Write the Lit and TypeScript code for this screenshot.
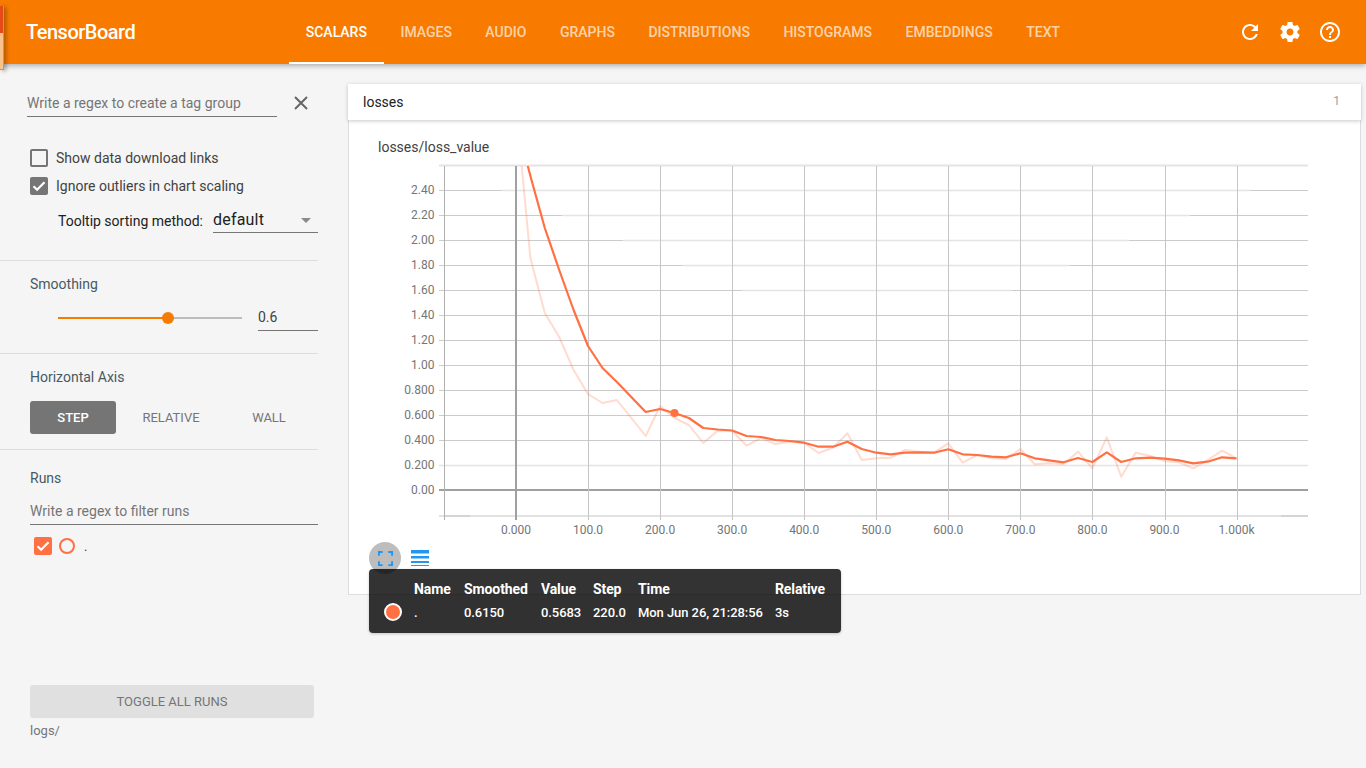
import { LitElement, html, svg, css } from "lit";
import { customElement } from "lit/decorators.js";

const TABS = ["SCALARS", "IMAGES", "AUDIO", "GRAPHS", "DISTRIBUTIONS", "HISTOGRAMS", "EMBEDDINGS", "TEXT"];

const SMOOTH = [120, 176, 228, 270, 310, 346, 368, 382, 397, 412, 409, 413, 418, 428, 429.5, 430.5, 436, 437, 440, 441, 442.7, 446.7, 446.7, 441.7, 449, 452.7, 454.3, 452.7, 452.3, 452.7, 449.3, 454.3, 455, 456.7, 457.3, 453.3, 458.3, 460.3, 462.3, 458, 462, 452.3, 462, 458.3, 457.7, 458.7, 460.3, 463.3, 461.7, 457.3, 458.3];
const RAW = [106, 258, 313, 337, 370, 394, 403, 400, 418, 436, 406, 418, 425, 443, 430.7, 430.7, 445.7, 438, 444, 441.7, 443, 453, 447.7, 433.3, 460, 458.3, 457.7, 450, 451.7, 452.7, 443.3, 462.7, 455, 458.3, 459, 449, 464.3, 463.3, 464, 451.7, 468.3, 437.3, 476.7, 452.7, 455.7, 461, 462.3, 468.3, 460, 450.7, 458.3];
const px = (i: number) => 516 + i * 14.41;
const pts = (a: number[]) => a.map((y, i) => `${px(i).toFixed(1)},${y}`).join(" ");

const Y_LABELS = ["2.40", "2.20", "2.00", "1.80", "1.60", "1.40", "1.20", "1.00", "0.800", "0.600", "0.400", "0.200", "0.00"];
const X_LABELS = ["0.000", "100.0", "200.0", "300.0", "400.0", "500.0", "600.0", "700.0", "800.0", "900.0", "1.000k"];
// x range in which a horizontal grid line has faded
const FADED: Record<number, [number, number]> = { 0: [502, 1250], 1: [562, 1190], 2: [623, 1129], 3: [682, 1070], 4: [742, 1012], 11: [439, 1308] };

const CHECK = svg`<path d="M3.5 9.2l3.6 3.6 7.4-7.6" fill="none" stroke="#fff" stroke-width="2.2"/>`;

@customElement("app-root")
export class AppRoot extends LitElement {
  static styles = css`
    :host { display: block; width: 1366px; height: 768px; overflow: hidden; position: relative; background: #f5f5f5; font-family: Roboto, sans-serif; font-size: 14px; color: #424242; }
    .edge { position: absolute; left: 0; top: 6px; width: 3px; height: 63px; z-index: 5; border-right: 1px solid #e8836b; border-bottom: 1px solid #e8836b; background: linear-gradient(#e64a19 0 27px, #f9c28d 27px); box-shadow: 2px 1px 4px rgba(0,0,0,.35); }
    header { height: 64px; background: #f87b00; display: flex; align-items: stretch; position: relative; z-index: 3; box-shadow: 0 2px 5px rgba(0,0,0,.28); color: #fff; }
    .logo { width: 263px; padding-left: 26px; font-size: 20px; font-weight: 500; line-height: 64px; letter-spacing: -.5px; flex: none; }
    .tabs { display: flex; }
    .tab { padding: 0 16.75px; font-size: 14px; font-weight: 500; line-height: 64px; color: rgba(255,255,255,.68); box-sizing: border-box; }
    .tab.on { color: #fff; box-shadow: inset 0 -2px 0 #fff; }
    .tools { margin-left: auto; display: flex; align-items: center; gap: 16px; padding-right: 24px; }
    .tools svg { width: 24px; height: 24px; fill: #fff; display: block; }
    .page { display: flex; height: 704px; }
    aside { width: 348px; flex: none; display: flex; flex-direction: column; }
    section { width: 318px; box-sizing: border-box; border-bottom: 1px solid #ddd; flex: none; }
    .s1 { height: 197px; padding-top: 28px; }
    .s2 { height: 93px; padding-top: 14px; }
    .s3 { height: 96px; padding-top: 14px; }
    .s4 { flex: 1; border-bottom: 0; padding: 19px 0 28px; display: flex; flex-direction: column; }
    .label { margin-left: 30px; line-height: 18px; color: #455a64; }
    .tagrow { display: flex; align-items: center; margin-left: 27px; }
    .input { box-sizing: border-box; height: 25px; border-bottom: 1px solid #757575; color: #757575; line-height: 23px; white-space: nowrap; }
    .tag { width: 250px; }
    .x { width: 16px; height: 16px; margin: -3px 0 0 16px; stroke: #666; stroke-width: 2; fill: none; }
    .check { display: flex; align-items: center; height: 18px; margin-left: 30px; gap: 8px; }
    .check + .check { margin-top: 10px; }
    .checks { margin-top: 32px; }
    .box { width: 18px; height: 18px; box-sizing: border-box; border: 2px solid #757575; border-radius: 2px; flex: none; }
    .box.on { background: #757575; }
    .box svg { display: block; width: 18px; height: 18px; margin: -2px; }
    .sort { display: flex; align-items: center; margin: 13px 0 0 58px; height: 25px; color: #212121; }
    .select { width: 105px; margin-left: 10px; box-sizing: border-box; height: 25px; border-bottom: 1px solid #757575; font-size: 16px; line-height: 22px; display: flex; justify-content: space-between; align-items: center; padding-right: 7px; letter-spacing: .2px; }
    .arrow { width: 0; height: 0; border: 5px solid transparent; border-top-color: #8a8a8a; border-bottom: 0; }
    .slider { display: flex; align-items: center; margin: 12px 0 0 58px; gap: 16px; height: 26px; }
    .track { width: 184px; height: 2px; background: #bdbdbd; position: relative; }
    .fill { height: 2px; background: #f57c00; }
    .thumb { position: absolute; top: -5px; width: 12px; height: 12px; margin-left: -6px; border-radius: 50%; background: #f57c00; }
    .val { flex: 1; color: #424242; }
    .btns { display: flex; margin: 15px 0 0 30px; height: 33px; font-size: 13px; text-align: center; line-height: 33px; color: #757575; }
    .btns div:nth-child(1) { width: 86px; background: #757575; color: #fff; border-radius: 3px; font-weight: 500; }
    .btns div:nth-child(2) { width: 110px; }
    .btns div:nth-child(3) { width: 86px; }
    .filter { margin: 12px 0 0 30px; height: 26px; line-height: 24px; }
    .run { display: flex; align-items: center; height: 18px; margin: 12px 0 0 34px; }
    .run .box { background: #ff7043; border-color: #ff7043; }
    .ring { width: 16px; height: 16px; box-sizing: border-box; border: 2px solid #ff7043; border-radius: 50%; margin-left: 7px; }
    .dot { margin-left: 9px; color: #424242; font-size: 13px; }
    .toggle { margin: auto 0 0 30px; width: 284px; height: 33px; background: #e0e0e0; border-radius: 3px; text-align: center; line-height: 33px; font-size: 13px; color: #757575; flex: none; }
    .logs { margin: 4px 0 0 30px; line-height: 18px; font-size: 13px; color: #757575; }
    main { width: 1013px; padding-top: 20px; }
    .bar { height: 36px; background: #fff; display: flex; align-items: center; justify-content: space-between; padding: 0 21px 0 15px; box-shadow: 0 1px 4px rgba(0,0,0,.22); position: relative; z-index: 1; color: #212121; }
    .bar span:last-child { font-size: 12px; color: #9e9e9e; margin-top: -3px; }
    .card { background: #fff; height: 475px; box-sizing: border-box; border: 1px solid #ddd; border-top: 0; position: relative; }
    .title { padding: 18px 0 0 29px; line-height: 18px; color: #424242; font-size: 14px; }
    .chart { display: block; margin: 4px 0 0 31px; }
    .chart text { font: 12px Roboto, sans-serif; fill: #757575; }
    .actions { display: flex; align-items: center; margin: 2px 0 0 20px; height: 32px; }
    .fs { width: 32px; height: 32px; border-radius: 50%; background: #bdbdbd; display: flex; align-items: center; justify-content: center; }
    .fs svg { display: block; width: 15px; height: 15px; fill: none; stroke: #2196f3; stroke-width: 2; }
    .menu { margin: -1px 0 0 10px; width: 18px; height: 16px; display: block; fill: #2196f3; }
    .tip { position: absolute; left: 20px; top: 449px; width: 472px; height: 64px; box-sizing: border-box; padding: 10px 0 0 45px; background: rgba(0,0,0,.8); border-radius: 4px; color: #fff; font-size: 13px; font-weight: 500; display: grid; grid-template-columns: 50px 77px 52px 45px 137px auto; grid-template-rows: 20px 26px; align-items: center; box-shadow: 0 1px 3px rgba(0,0,0,.2); }
    .tip b { font-size: 14px; font-weight: 700; letter-spacing: -.1px; }
    .tip span { letter-spacing: -.07px; }
    .swatch { position: absolute; left: 15px; top: 34px; width: 18px; height: 18px; box-sizing: border-box; border: 2px solid #fff; border-radius: 50%; background: #ff7043; }
  `;

  private renderChart() {
    const hLines = Y_LABELS.map((_, i) => {
      const y = 190.5 + 25 * i;
      const f = FADED[i];
      if (i === 12) return svg`<line x1="439" x2="1308" y1="490" y2="490" stroke="#a0a0a0" stroke-width="2"/>`;
      return f
        ? svg`<line x1="439" x2="1308" y1=${y} y2=${y} stroke="#cbcbcb"/><line x1=${f[0]} x2=${f[1]} y1=${y} y2=${y} stroke="#e4e4e4" stroke-width="1.5"/>`
        : svg`<line x1="439" x2="1308" y1=${y} y2=${y} stroke="#cbcbcb"/>`;
    });
    const vLines = Array.from({ length: 12 }, (_, i) => {
      const x = 444.5 + 72.05 * i;
      const X = Math.round(x - 0.5) + 0.5;
      if (i === 1) return svg`<line x1="516" x2="516" y1="166" y2="520" stroke="#a0a0a0" stroke-width="2"/>`;
      return svg`<line x1=${X} x2=${X} y1="166" y2="520" stroke=${i === 0 ? "#b0b0b0" : "#c6c6c6"}/>`;
    });
    return html`<svg class="chart" width="940" height="380" viewBox="380 160 940 380">
      <defs><clipPath id="plot"><rect x="440" y="166" width="868" height="350"/></clipPath></defs>
      <line x1="439" x2="1308" y1="165.5" y2="165.5" stroke="#e4e4e4" stroke-width="2"/>
      <line x1="439" x2="1308" y1="516" y2="516" stroke="#e2e2e2" stroke-width="2"/>
      <line x1="444" x2="470" y1="516" y2="516" stroke="#c6c6c6"/>
      <line x1="1281" x2="1308" y1="516" y2="516" stroke="#c6c6c6"/>
      ${hLines}${vLines}
      <g clip-path="url(#plot)" fill="none" stroke-linejoin="round">
        <polyline points=${pts(RAW)} stroke="#ff7043" stroke-opacity=".25" stroke-width="2"/>
        <polyline points=${pts(SMOOTH)} stroke="#ff7043" stroke-width="2.2"/>
        <circle cx="674.5" cy="413" r="4" fill="#ff7043" stroke="none"/>
      </g>
      ${Y_LABELS.map((t, i) => svg`<text x="434.5" y=${194 + 25 * i} text-anchor="end">${t}</text>`)}
      ${X_LABELS.map((t, i) => svg`<text x=${516 + 72.05 * i} y="533.5" text-anchor="middle">${t}</text>`)}
    </svg>`;
  }

  render() {
    return html`
      <div class="edge"></div>
      <header>
        <div class="logo">TensorBoard</div>
        <div class="tabs">${TABS.map((t, i) => html`<div class="tab ${i === 0 ? "on" : ""}">${t}</div>`)}</div>
        <div class="tools">
          <svg viewBox="0 0 24 24"><path d="M17.65 6.35C16.2 4.9 14.21 4 12 4c-4.42 0-7.99 3.58-7.99 8s3.57 8 7.99 8c3.73 0 6.84-2.55 7.73-6h-2.08c-.82 2.33-3.04 4-5.65 4-3.31 0-6-2.69-6-6s2.69-6 6-6c1.66 0 3.14.69 4.22 1.78L13 11h7V4l-2.35 2.35z"/></svg>
          <svg viewBox="0 0 24 24"><path d="M19.43 12.98c.04-.32.07-.64.07-.98s-.03-.66-.07-.98l2.11-1.65c.19-.15.24-.42.12-.64l-2-3.46c-.12-.22-.39-.3-.61-.22l-2.49 1c-.52-.4-1.08-.73-1.69-.98l-.38-2.65C14.46 2.18 14.25 2 14 2h-4c-.25 0-.46.18-.49.42l-.38 2.65c-.61.25-1.17.59-1.69.98l-2.49-1c-.23-.09-.49 0-.61.22l-2 3.46c-.13.22-.07.49.12.64l2.11 1.65c-.04.32-.07.65-.07.98s.03.66.07.98l-2.11 1.65c-.19.15-.24.42-.12.64l2 3.46c.12.22.39.3.61.22l2.49-1c.52.4 1.08.73 1.69.98l.38 2.65c.03.24.24.42.49.42h4c.25 0 .46-.18.49-.42l.38-2.65c.61-.25 1.17-.59 1.69-.98l2.49 1c.23.09.49 0 .61-.22l2-3.46c.12-.22.07-.49-.12-.64l-2.11-1.65zM12 15.5c-1.93 0-3.5-1.57-3.5-3.5s1.57-3.5 3.5-3.5 3.5 1.57 3.5 3.5-1.57 3.5-3.5 3.5z"/></svg>
          <svg viewBox="0 0 24 24"><path d="M11 18h2v-2h-2v2zm1-16C6.48 2 2 6.48 2 12s4.48 10 10 10 10-4.48 10-10S17.52 2 12 2zm0 18c-4.41 0-8-3.59-8-8s3.59-8 8-8 8 3.59 8 8-3.59 8-8 8zm0-14c-2.21 0-4 1.79-4 4h2c0-1.1.9-2 2-2s2 .9 2 2c0 2-3 1.75-3 5h2c0-2.25 3-2.5 3-5 0-2.21-1.79-4-4-4z"/></svg>
        </div>
      </header>
      <div class="page">
        <aside>
          <section class="s1">
            <div class="tagrow">
              <div class="input tag">Write a regex to create a tag group</div>
              <svg class="x" viewBox="0 0 16 16"><path d="M2 2l12 12M14 2L2 14"/></svg>
            </div>
            <div class="checks">
              <div class="check"><div class="box"></div>Show data download links</div>
              <div class="check"><div class="box on"><svg viewBox="0 0 18 18">${CHECK}</svg></div>Ignore outliers in chart scaling</div>
            </div>
            <div class="sort">Tooltip sorting method:
              <div class="select">default<span class="arrow"></span></div>
            </div>
          </section>
          <section class="s2">
            <div class="label">Smoothing</div>
            <div class="slider">
              <div class="track"><div class="fill" style="width:110px"></div><div class="thumb" style="left:110px"></div></div>
              <div class="input val">0.6</div>
            </div>
          </section>
          <section class="s3">
            <div class="label">Horizontal Axis</div>
            <div class="btns"><div>STEP</div><div>RELATIVE</div><div>WALL</div></div>
          </section>
          <section class="s4">
            <div class="label">Runs</div>
            <div class="input filter">Write a regex to filter runs</div>
            <div class="run"><div class="box"><svg viewBox="0 0 18 18">${CHECK}</svg></div><div class="ring"></div><div class="dot">.</div></div>
            <div class="toggle">TOGGLE ALL RUNS</div>
            <div class="logs">logs/</div>
          </section>
        </aside>
        <main>
          <div class="bar"><span>losses</span><span>1</span></div>
          <div class="card">
            <div class="title">losses/loss_value</div>
            ${this.renderChart()}
            <div class="actions">
              <div class="fs"><svg viewBox="0 0 16 16"><path d="M1 5V1h4M11 1h4v4M15 11v4h-4M5 15H1v-4"/></svg></div>
              <svg class="menu" viewBox="0 0 18 16"><rect width="18" height="3.5"/><rect y="6" width="18" height="2.5"/><rect y="11" width="18" height="2"/><rect y="15" width="18" height="1"/></svg>
            </div>
            <div class="tip">
              <b>Name</b><b>Smoothed</b><b>Value</b><b>Step</b><b>Time</b><b>Relative</b>
              <span>.</span><span>0.6150</span><span>0.5683</span><span>220.0</span><span>Mon Jun 26, 21:28:56</span><span>3s</span>
              <div class="swatch"></div>
            </div>
          </div>
        </main>
      </div>
    `;
  }
}
